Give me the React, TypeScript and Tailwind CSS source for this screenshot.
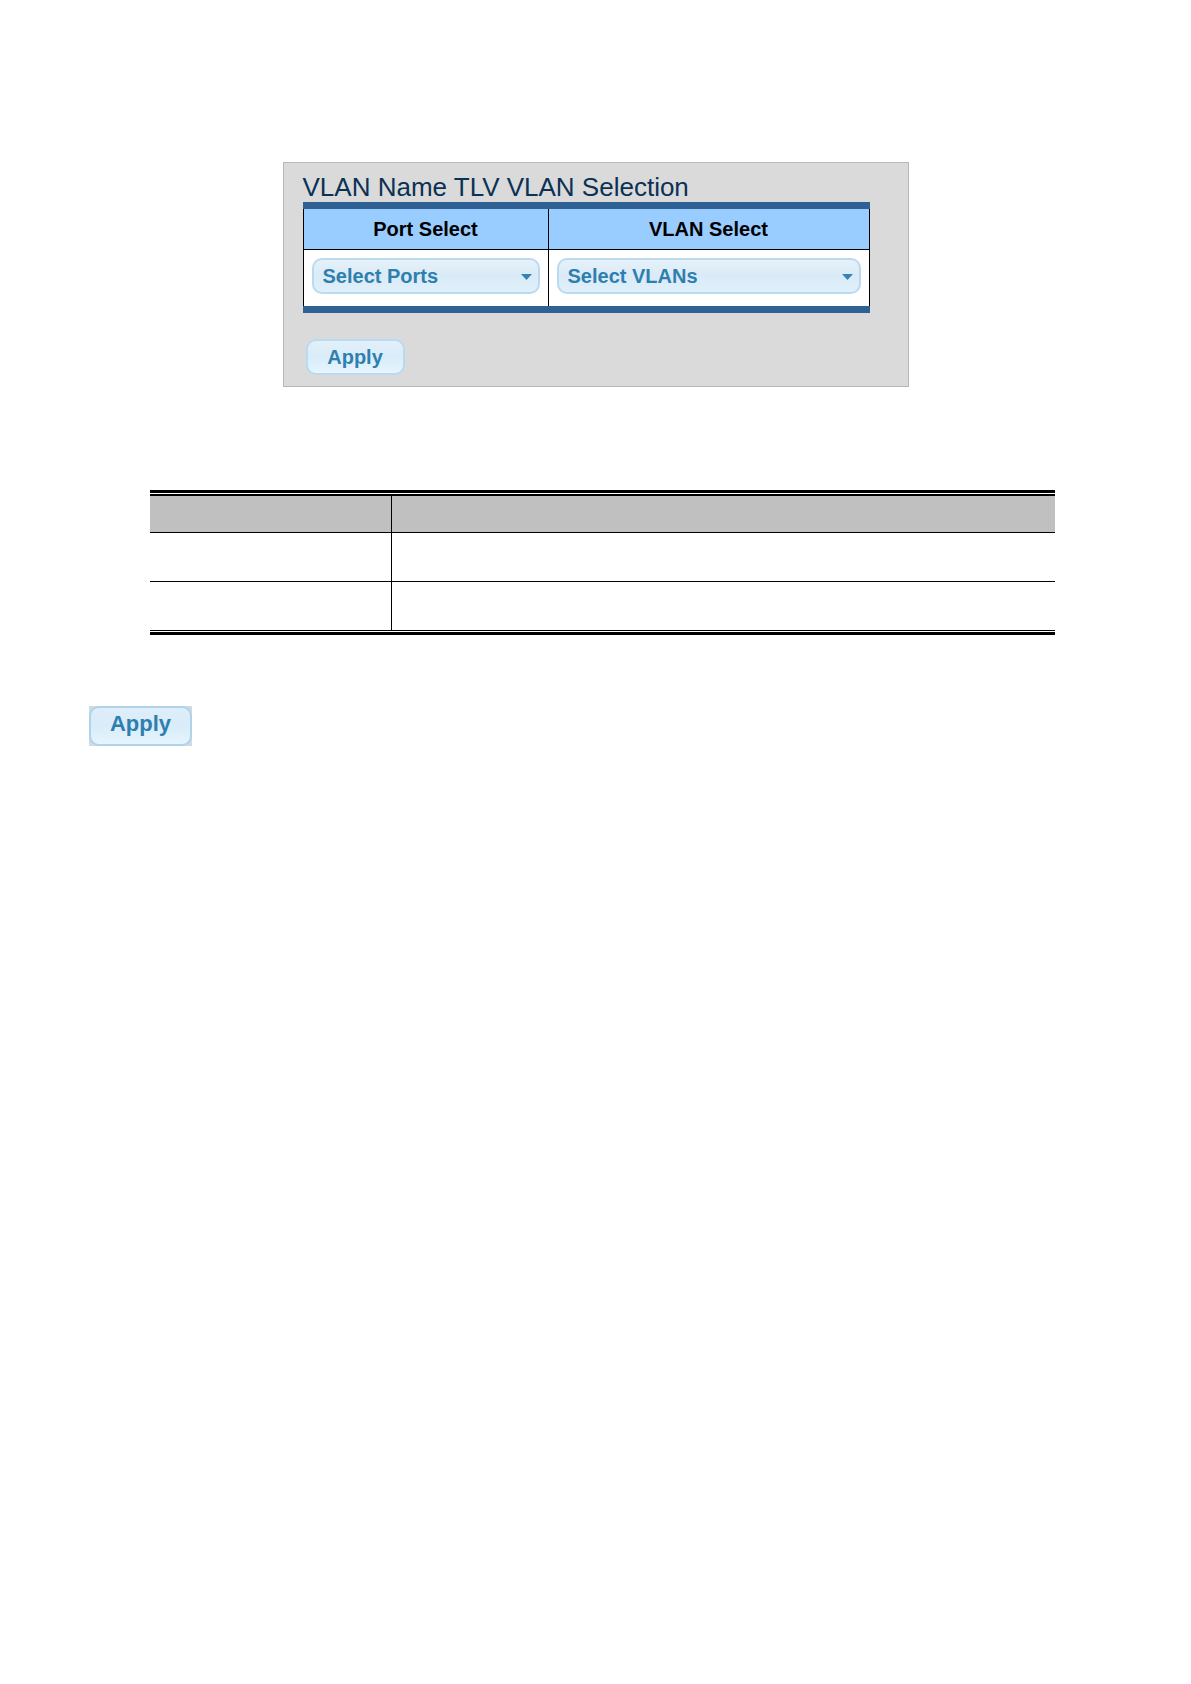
type SelectMenuProps = {
  labelledBy: string;
  placeholder: string;
};

const SelectMenu = ({ labelledBy, placeholder }: SelectMenuProps) => {
  return (
    <div className="relative">
      <select
        aria-labelledby={labelledBy}
        className="block h-9 w-full appearance-none rounded-[10px] border-2 border-[#b9daf1] bg-linear-to-b from-[#e6f1f9] via-[#d9ebf7] to-[#e0f0fb] pl-[9px] pr-8 text-xl font-bold leading-8 text-[#2f7fae]"
      >
        <option>{placeholder}</option>
      </select>
      <svg
        className="pointer-events-none absolute right-2 top-4 h-[6px] w-[11px]"
        viewBox="0 0 11 6"
        aria-hidden="true"
      >
        <path d="M0 0h11L5.5 6z" fill="#3584b5" />
      </svg>
    </div>
  );
};

const VlanPanel = () => {
  return (
    <section className="mx-auto w-full max-w-[626px] border border-[#b8b8b8] bg-[#dadada] pb-[11px] pl-[19px] pr-[38px] pt-[9px]">
      <h1 className="text-[26px] leading-[30px] text-[#0b3154]">
        VLAN Name TLV VLAN Selection
      </h1>
      <table className="w-full table-fixed border-separate border-spacing-0 border-y-[7px] border-[#2f6195] bg-white">
        <colgroup>
          <col className="w-[245px]" />
          <col />
        </colgroup>
        <thead>
          <tr className="bg-[#99ccff] text-xl leading-10 text-black">
            <th id="port-select" className="border-b border-l border-black p-0 font-bold">
              Port Select
            </th>
            <th id="vlan-select" className="border-x border-b border-black p-0 font-bold">
              VLAN Select
            </th>
          </tr>
        </thead>
        <tbody>
          <tr>
            <td className="border-l border-black px-2 pb-3 pt-2">
              <SelectMenu labelledBy="port-select" placeholder="Select Ports" />
            </td>
            <td className="border-x border-black px-2 pb-3 pt-2">
              <SelectMenu labelledBy="vlan-select" placeholder="Select VLANs" />
            </td>
          </tr>
        </tbody>
      </table>
      <div className="pl-[3px] pt-[26px]">
        <button
          type="button"
          className="block h-9 w-[99px] rounded-[10px] border-2 border-[#b9daf1] bg-linear-to-b from-[#e2f0fa] via-[#d9ecf9] to-[#e6f5ff] text-xl font-bold leading-8 text-[#2f7fae]"
        >
          Apply
        </button>
      </div>
    </section>
  );
};

const DescriptionTable = () => {
  return (
    <div className="border-y-[3px] border-black py-px">
      <table className="w-full table-fixed border-separate border-spacing-0 border-b border-t-2 border-black">
        <colgroup>
          <col className="w-[242px]" />
          <col />
        </colgroup>
        <thead>
          <tr className="h-[37px] bg-[#c0c0c0]">
            <th className="border-b border-r border-black" />
            <th className="border-b border-black" />
          </tr>
        </thead>
        <tbody>
          <tr className="h-[49px]">
            <td className="border-b border-r border-black" />
            <td className="border-b border-black" />
          </tr>
          <tr className="h-12">
            <td className="border-r border-black" />
            <td />
          </tr>
        </tbody>
      </table>
    </div>
  );
};

const App = () => {
  return (
    <main className="min-h-screen bg-white pt-[162px] font-['Liberation_Sans',Arial,sans-serif]">
      <VlanPanel />

      {/* Object / description table */}
      <div className="pl-[150px] pr-[136px] pt-[103px]">
        <DescriptionTable />
      </div>

      {/* Buttons */}
      <div className="pl-[89px] pt-[71px]">
        <div className="w-fit bg-[#cfdbe4]">
          <button
            type="button"
            className="block h-10 w-[103px] rounded-[10px] border-2 border-[#b0d3ea] bg-linear-to-b from-[#deeefa] via-[#d9ecf9] to-[#e6f5ff] pb-1 text-[22px] font-bold leading-8 text-[#2f7fae]"
          >
            Apply
          </button>
        </div>
      </div>
    </main>
  );
};

export default App;
